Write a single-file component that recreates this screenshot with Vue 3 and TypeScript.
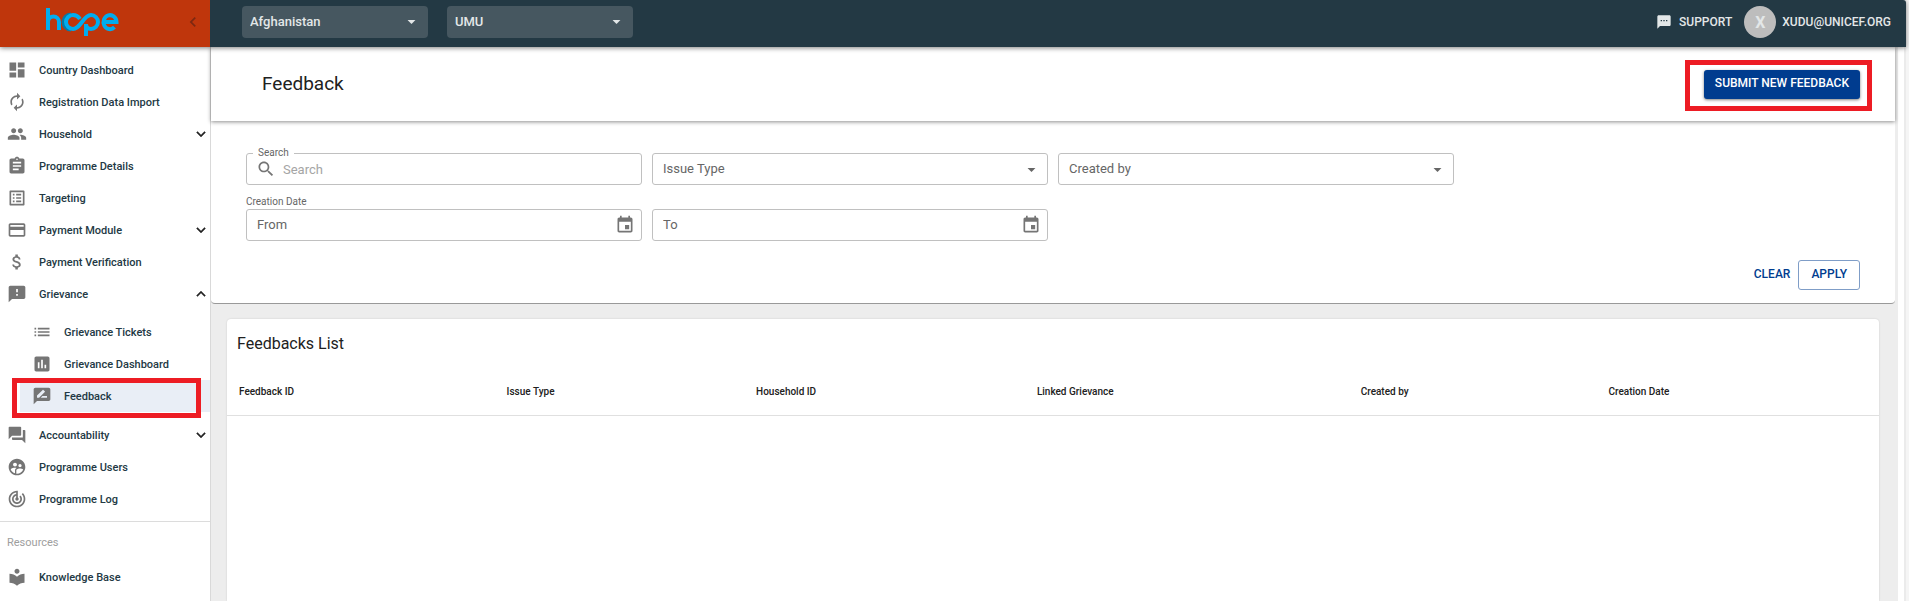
<script setup lang="ts">
import { ref } from 'vue'

interface NavItem {
  label: string
  icon: string
  toggle?: 'more' | 'less'
  children?: { label: string; icon: string; active?: boolean }[]
}

const icons: Record<string, string> = {
  dashboard: 'M3 13h8V3H3v10zm0 8h8v-6H3v6zm10 0h8V11h-8v10zm0-18v6h8V3h-8z',
  autorenew:
    'M12 6v3l4-4-4-4v3c-4.42 0-8 3.58-8 8 0 1.57.46 3.03 1.24 4.26L6.7 14.8c-.45-.83-.7-1.79-.7-2.8 0-3.31 2.69-6 6-6zm6.76 1.74L17.3 9.2c.44.84.7 1.79.7 2.8 0 3.31-2.69 6-6 6v-3l-4 4 4 4v-3c4.42 0 8-3.58 8-8 0-1.57-.46-3.03-1.24-4.26z',
  people:
    'M16 11c1.66 0 2.99-1.34 2.99-3S17.66 5 16 5c-1.66 0-3 1.34-3 3s1.34 3 3 3zm-8 0c1.66 0 2.99-1.34 2.99-3S9.66 5 8 5C6.34 5 5 6.34 5 8s1.34 3 3 3zm0 2c-2.33 0-7 1.17-7 3.5V19h14v-2.5c0-2.33-4.67-3.5-7-3.5zm8 0c-.29 0-.62.02-.97.05 1.16.84 1.97 1.97 1.97 3.45V19h6v-2.5c0-2.33-4.67-3.5-7-3.5z',
  assignment:
    'M19 3h-4.18C14.4 1.84 13.3 1 12 1c-1.3 0-2.4.84-2.82 2H5c-1.1 0-2 .9-2 2v14c0 1.1.9 2 2 2h14c1.1 0 2-.9 2-2V5c0-1.1-.9-2-2-2zm-7 0c.55 0 1 .45 1 1s-.45 1-1 1-1-.45-1-1 .45-1 1-1zm2 14H7v-2h7v2zm3-4H7v-2h10v2zm0-4H7V7h10v2z',
  listAlt:
    'M19 5v14H5V5h14m1.1-2H3.9c-.5 0-.9.4-.9.9v16.2c0 .4.4.9.9.9h16.2c.4 0 .9-.5.9-.9V3.9c0-.5-.5-.9-.9-.9zM11 7h6v2h-6V7zm0 4h6v2h-6v-2zm0 4h6v2h-6zM7 7h2v2H7zm0 4h2v2H7zm0 4h2v2H7z',
  payment:
    'M20 4H4c-1.11 0-1.99.89-1.99 2L2 18c0 1.11.89 2 2 2h16c1.11 0 2-.89 2-2V6c0-1.11-.89-2-2-2zm0 14H4v-6h16v6zm0-10H4V6h16v2z',
  money:
    'M11.8 10.9c-2.27-.59-3-1.2-3-2.15 0-1.09 1.01-1.85 2.7-1.85 1.78 0 2.44.85 2.5 2.1h2.21c-.07-1.72-1.12-3.3-3.21-3.81V3h-3v2.16c-1.94.42-3.5 1.68-3.5 3.61 0 2.31 1.91 3.46 4.7 4.13 2.5.6 3 1.48 3 2.41 0 .69-.49 1.79-2.7 1.79-2.06 0-2.87-.92-2.98-2.1h-2.2c.12 2.19 1.76 3.42 3.68 3.83V21h3v-2.15c1.95-.37 3.5-1.5 3.5-3.55 0-2.84-2.43-3.81-4.7-4.4z',
  feedback:
    'M20 2H4c-1.1 0-1.99.9-1.99 2L2 22l4-4h14c1.1 0 2-.9 2-2V4c0-1.1-.9-2-2-2zm-7 12h-2v-2h2v2zm0-4h-2V6h2v4z',
  list: 'M3 13h2v-2H3v2zm0 4h2v-2H3v2zm0-8h2V7H3v2zm4 4h14v-2H7v2zm0 4h14v-2H7v2zM7 7v2h14V7H7z',
  assessment:
    'M19 3H5c-1.1 0-2 .9-2 2v14c0 1.1.9 2 2 2h14c1.1 0 2-.9 2-2V5c0-1.1-.9-2-2-2zM9 17H7v-7h2v7zm4 0h-2V7h2v10zm4 0h-2v-4h2v4z',
  rateReview:
    'M20 2H4c-1.1 0-1.99.9-1.99 2L2 22l4-4h14c1.1 0 2-.9 2-2V4c0-1.1-.9-2-2-2zM6 14v-2.47l6.88-6.88c.2-.2.51-.2.71 0l1.77 1.77c.2.2.2.51 0 .71L8.47 14H6zm12 0h-7.5l2-2H18v2z',
  forum:
    'M21 6h-2v9H6v2c0 .55.45 1 1 1h11l4 4V7c0-.55-.45-1-1-1zm-4 6V3c0-.55-.45-1-1-1H3c-.55 0-1 .45-1 1v14l4-4h10c.55 0 1-.45 1-1z',
  users:
    'M11.99 2c-5.52 0-10 4.48-10 10s4.48 10 10 10 10-4.48 10-10-4.48-10-10-10zm3.61 6.34c1.07 0 1.93.86 1.93 1.93 0 1.07-.86 1.93-1.93 1.93-1.07 0-1.93-.86-1.93-1.93-.01-1.07.86-1.93 1.93-1.93zm-6-1.58c1.3 0 2.36 1.06 2.36 2.36 0 1.3-1.06 2.36-2.36 2.36s-2.36-1.06-2.36-2.36c0-1.31 1.05-2.36 2.36-2.36zm0 9.13v3.75c-2.4-.75-4.3-2.6-5.14-4.96 1.05-1.12 3.67-1.69 5.14-1.69.53 0 1.2.08 1.9.22-1.64.87-1.9 2.02-1.9 2.68zM11.99 20c-.27 0-.53-.01-.79-.04v-4.07c0-1.42 2.94-2.13 4.4-2.13 1.07 0 2.92.39 3.84 1.15-1.17 2.97-4.06 5.09-7.45 5.09z',
  track:
    'M19.07 4.93l-1.41 1.41C19.1 7.79 20 9.79 20 12c0 4.42-3.58 8-8 8s-8-3.58-8-8c0-4.08 3.05-7.44 7-7.93v2.02C8.16 6.57 6 9.03 6 12c0 3.31 2.69 6 6 6s6-2.69 6-6c0-1.66-.67-3.16-1.76-4.24l-1.41 1.41C15.55 9.9 16 10.9 16 12c0 2.21-1.79 4-4 4s-4-1.79-4-4c0-1.86 1.28-3.41 3-3.86v2.14c-.6.35-1 .98-1 1.72 0 1.1.9 2 2 2s2-.9 2-2c0-.74-.4-1.38-1-1.72V2h-1C6.48 2 2 6.48 2 12s4.48 10 10 10 10-4.48 10-10c0-2.76-1.12-5.26-2.93-7.07z',
  library:
    'M12 11.55C9.64 9.35 6.48 8 3 8v11c3.48 0 6.64 1.35 9 3.55 2.36-2.19 5.52-3.55 9-3.55V8c-3.48 0-6.64 1.35-9 3.55zM12 8c1.66 0 3-1.34 3-3s-1.34-3-3-3-3 1.34-3 3 1.34 3 3 3z',
  sms: 'M20 2H4c-1.1 0-1.99.9-1.99 2L2 22l4-4h14c1.1 0 2-.9 2-2V4c0-1.1-.9-2-2-2zM9 11H7V9h2v2zm4 0h-2V9h2v2zm4 0h-2V9h2v2z',
  search:
    'M15.5 14h-.79l-.28-.27C15.41 12.59 16 11.11 16 9.5 16 5.91 13.09 3 9.5 3S3 5.91 3 9.5 5.91 16 9.5 16c1.61 0 3.09-.59 4.23-1.57l.27.28v.79l5 4.99L20.49 19l-4.99-5zm-6 0C7.01 14 5 11.99 5 9.5S7.01 5 9.5 5 14 7.01 14 9.5 11.99 14 9.5 14z',
  event:
    'M17 12h-5v5h5v-5zM16 1v2H8V1H6v2H5c-1.11 0-1.99.9-1.99 2L3 19c0 1.1.89 2 2 2h14c1.1 0 2-.9 2-2V5c0-1.1-.9-2-2-2h-1V1h-2zm3 18H5V8h14v11z',
  more: 'M16.59 8.59L12 13.17 7.41 8.59 6 10l6 6 6-6z',
  less: 'M12 8l-6 6 1.41 1.41L12 10.83l4.59 4.58L18 14z',
  left: 'M15.41 7.41L14 6l-6 6 6 6 1.41-1.41L10.83 12z',
  drop: 'M7 10l5 5 5-5z',
}

const nav: NavItem[] = [
  { label: 'Country Dashboard', icon: 'dashboard' },
  { label: 'Registration Data Import', icon: 'autorenew' },
  { label: 'Household', icon: 'people', toggle: 'more' },
  { label: 'Programme Details', icon: 'assignment' },
  { label: 'Targeting', icon: 'listAlt' },
  { label: 'Payment Module', icon: 'payment', toggle: 'more' },
  { label: 'Payment Verification', icon: 'money' },
  {
    label: 'Grievance',
    icon: 'feedback',
    toggle: 'less',
    children: [
      { label: 'Grievance Tickets', icon: 'list' },
      { label: 'Grievance Dashboard', icon: 'assessment' },
      { label: 'Feedback', icon: 'rateReview', active: true },
    ],
  },
  { label: 'Accountability', icon: 'forum', toggle: 'more' },
  { label: 'Programme Users', icon: 'users' },
  { label: 'Programme Log', icon: 'track' },
]

const columns = ['Feedback ID', 'Issue Type', 'Household ID', 'Linked Grievance', 'Created by', 'Creation Date']

const search = ref('')
const from = ref('')
const to = ref('')
</script>

<template>
  <div class="app">
    <header class="topbar">
      <div class="brand">
        <svg class="logo" viewBox="0 0 74 30" role="img" aria-label="hope">
          <path class="shade" d="M26 8a7 7 0 0 0 0 14" />
          <path d="M3 1v22M3 15a5.5 5.5 0 0 1 11 0v8" />
          <path d="M35 12C33 9 31 8 28 8a7 7 0 0 0 0 14C36 22 38 8 46 8a7 7 0 0 1 0 14c-3 0-5-2-5-5v12" />
          <path d="M58.5 15H71.5A6.5 7 0 1 0 69.5 20.2" />
        </svg>
        <button class="collapse" type="button" aria-label="Collapse menu">
          <svg viewBox="0 0 24 24"><path :d="icons.left" /></svg>
        </button>
      </div>
      <div class="bar">
        <div class="pick">
          <select aria-label="Business area"><option>Afghanistan</option></select>
          <svg viewBox="0 0 24 24"><path :d="icons.drop" /></svg>
        </div>
        <div class="pick">
          <select aria-label="Programme"><option>UMU</option></select>
          <svg viewBox="0 0 24 24"><path :d="icons.drop" /></svg>
        </div>
        <a class="support" href="#support">
          <svg viewBox="0 0 24 24"><path :d="icons.sms" /></svg>SUPPORT
        </a>
        <button class="user" type="button"><span class="avatar">X</span>XUDU@UNICEF.ORG</button>
      </div>
    </header>

    <div class="body">
      <nav class="sidebar">
        <template v-for="item in nav" :key="item.label">
          <a class="item" href="#">
            <svg class="icon" viewBox="0 0 24 24"><path :d="icons[item.icon]" /></svg>
            <span>{{ item.label }}</span>
            <svg v-if="item.toggle" class="toggle" viewBox="0 0 24 24"><path :d="icons[item.toggle]" /></svg>
          </a>
          <div v-if="item.children" class="sub">
            <a v-for="c in item.children" :key="c.label" class="item" :class="{ active: c.active }" href="#">
              <svg class="icon" viewBox="0 0 24 24"><path :d="icons[c.icon]" /></svg>
              <span>{{ c.label }}</span>
            </a>
          </div>
        </template>
        <hr />
        <div class="caption">Resources</div>
        <a class="item" href="#">
          <svg class="icon" viewBox="0 0 24 24"><path :d="icons.library" /></svg>
          <span>Knowledge Base</span>
        </a>
      </nav>

      <main>
        <section class="page-head">
          <h1>Feedback</h1>
          <div class="marked"><button class="submit" type="button">SUBMIT NEW FEEDBACK</button></div>
        </section>

        <form class="filters" @submit.prevent>
          <div class="row">
            <div class="field">
              <label class="notch" for="search">Search</label>
              <svg class="lens" viewBox="0 0 24 24"><path :d="icons.search" /></svg>
              <input id="search" v-model="search" class="pale" type="text" placeholder="Search" />
            </div>
            <div class="field">
              <select aria-label="Issue Type"><option>Issue Type</option></select>
              <svg class="arrow" viewBox="0 0 24 24"><path :d="icons.drop" /></svg>
            </div>
            <div class="field">
              <select aria-label="Created by"><option>Created by</option></select>
              <svg class="arrow" viewBox="0 0 24 24"><path :d="icons.drop" /></svg>
            </div>
          </div>
          <label class="date-label" for="from">Creation Date</label>
          <div class="row">
            <div class="field">
              <input id="from" v-model="from" type="text" placeholder="From" />
              <button class="cal" type="button" aria-label="Pick start date">
                <svg viewBox="0 0 24 24"><path :d="icons.event" /></svg>
              </button>
            </div>
            <div class="field">
              <input v-model="to" type="text" placeholder="To" aria-label="To" />
              <button class="cal" type="button" aria-label="Pick end date">
                <svg viewBox="0 0 24 24"><path :d="icons.event" /></svg>
              </button>
            </div>
          </div>
          <div class="actions">
            <button class="clear" type="button">CLEAR</button>
            <button class="apply" type="submit">APPLY</button>
          </div>
        </form>

        <section class="card">
          <h2>Feedbacks List</h2>
          <table>
            <thead>
              <tr><th v-for="c in columns" :key="c" scope="col">{{ c }}</th></tr>
            </thead>
          </table>
        </section>
      </main>
      <div class="gutter"></div>
    </div>
  </div>
</template>

<style>
body {
  margin: 0;
  background: #f5f5f5;
}
</style>

<style scoped>
.app {
  display: flex;
  flex-direction: column;
  min-height: 100vh;
  font-family: Roboto, 'Liberation Sans', sans-serif;
  color: #212121;
}
.app *,
.app *::after {
  box-sizing: border-box;
}
button,
input,
select {
  font: inherit;
  color: inherit;
  margin: 0;
  border: 0;
  background: none;
  outline: 0;
}
button {
  padding: 0;
  cursor: pointer;
}
select {
  appearance: none;
}
a {
  color: inherit;
  text-decoration: none;
}
svg {
  fill: currentColor;
  flex: none;
}

.topbar {
  position: relative;
  z-index: 2;
  display: flex;
  height: 47px;
  margin-right: 3px;
  border-top-right-radius: 3px;
  background: #233944;
  box-shadow: 0 1px 5px rgba(0, 0, 0, 0.5);
}
.brand {
  display: flex;
  align-items: center;
  justify-content: space-between;
  width: 210px;
  flex: none;
  padding: 0 7px 4px 45px;
  background: #bf360c;
}
.logo {
  width: 74px;
  height: 30px;
  fill: none;
  stroke: #00adef;
  stroke-width: 4;
}
.logo .shade {
  stroke: #067ba6;
  stroke-width: 5;
}
.collapse {
  width: 20px;
  height: 20px;
  color: #7c2812;
}
.collapse svg {
  display: block;
  width: 20px;
  height: 20px;
}
.bar {
  display: flex;
  align-items: center;
  flex: 1;
  padding: 0 15px 3px 32px;
  font-size: 12px;
  font-weight: 500;
  color: #e3e7e8;
}
.pick {
  position: relative;
  width: 186px;
  height: 32px;
  margin-right: 19px;
  border-radius: 4px;
  background: #465760;
}
.pick select {
  width: 100%;
  height: 100%;
  padding: 0 8px 2px;
  font-size: 13px;
}
.pick svg {
  position: absolute;
  right: 7px;
  top: 6px;
  width: 19px;
  height: 19px;
  pointer-events: none;
}
.support {
  display: flex;
  align-items: center;
  gap: 7px;
  margin-left: auto;
}
.support svg {
  width: 16px;
  height: 16px;
}
.user {
  display: flex;
  align-items: center;
  gap: 6px;
  margin-left: 12px;
}
.avatar {
  display: grid;
  place-items: center;
  width: 32px;
  height: 32px;
  border-radius: 50%;
  background: #bdbdbd;
  font-size: 16px;
  font-weight: 700;
}

.body {
  display: flex;
  flex: 1;
}
.sidebar {
  width: 211px;
  flex: none;
  padding: 7px 0;
  border-right: 1px solid #d9d9d9;
  background: #fff;
}
.item {
  display: flex;
  align-items: center;
  height: 32px;
  padding-left: 7px;
  color: #233944;
  font-size: 11px;
  font-weight: 500;
}
.icon {
  width: 20px;
  height: 20px;
  margin-right: 12px;
  color: #757575;
}
.toggle {
  width: 18px;
  height: 18px;
  margin-left: auto;
  color: #222;
}
.toggle path {
  stroke: currentColor;
  stroke-width: 0.5;
}
.sub {
  padding: 6px 0 7px 20px;
}
.sub .item {
  padding-left: 12px;
}
.active {
  position: relative;
  background: #e9eef6;
}
.active::after {
  content: '';
  position: absolute;
  inset: -2px 9px -6px -8px;
  border: 5px solid #ed1c24;
}
hr {
  height: 1px;
  margin: 6px 0 0;
  border: 0;
  background: #dcdcdc;
}
.caption {
  padding: 14px 7px 11px;
  font-size: 11px;
  line-height: 14px;
  color: #9e9e9e;
}

main {
  display: flex;
  flex-direction: column;
  flex: 1;
  min-width: 0;
  padding-right: 3px;
  background: #ededed;
}
.gutter {
  width: 11px;
  flex: none;
  border-right: 3px solid #f5f5f5;
  background: #fff;
  box-shadow: inset -2px 0 #ebebeb;
}
.page-head {
  position: relative;
  z-index: 1;
  display: flex;
  align-items: center;
  justify-content: space-between;
  height: 74px;
  padding: 0 35px 0 51px;
  background: #fff;
  box-shadow: 0 1px 4px rgba(0, 0, 0, 0.45);
}
h1,
h2 {
  margin: 0;
  font-weight: 400;
}
h1 {
  padding-bottom: 2px;
  font-size: 19px;
}
.marked {
  position: relative;
}
.marked::after {
  content: '';
  position: absolute;
  inset: -10px -12px -12px -19px;
  border: 5px solid #ed1c24;
  pointer-events: none;
}
.submit {
  display: block;
  height: 29px;
  padding: 0 11px 2px;
  border-radius: 3px;
  background: #003c8f;
  box-shadow: 0 1px 3px rgba(0, 0, 0, 0.5);
  color: #fff;
  font-size: 12px;
  font-weight: 500;
}
.filters {
  padding: 32px 35px 13px;
  border-bottom: 1px solid #999;
  border-radius: 0 0 4px 4px;
  background: #fff;
  font-size: 13px;
  color: #666;
}
.row {
  display: grid;
  grid-template-columns: repeat(4, 1fr);
  gap: 10px;
}
.field {
  position: relative;
  display: flex;
  align-items: center;
  height: 32px;
  border: 1px solid #c0c0c0;
  border-radius: 3px;
}
.field input,
.field select {
  flex: 1;
  min-width: 0;
  height: 100%;
  padding: 0 10px 2px;
}
.field input::placeholder {
  color: #666;
  opacity: 1;
}
.field .pale {
  padding: 1px 7px 0;
}
.field .pale::placeholder {
  color: #a5a5a5;
}
.notch {
  position: absolute;
  top: -7px;
  left: 6px;
  padding: 0 5px;
  background: #fff;
  font-size: 10px;
  line-height: 12px;
}
.lens {
  width: 20px;
  height: 20px;
  margin-left: 9px;
  color: #757575;
}
.arrow {
  position: absolute;
  right: 6px;
  top: 6px;
  width: 19px;
  height: 19px;
  pointer-events: none;
}
.cal {
  margin-right: 6px;
  color: #757575;
}
.cal svg {
  display: block;
  width: 20px;
  height: 20px;
}
.date-label {
  display: block;
  padding: 11px 0 1px;
  font-size: 10px;
  line-height: 12px;
}
.actions {
  display: flex;
  justify-content: flex-end;
  gap: 8px;
  margin-top: 19px;
  font-size: 12px;
  font-weight: 500;
  color: #003c8f;
}
.apply {
  height: 30px;
  padding: 0 12px 2px;
  border: 1px solid #7f9dc7;
  border-radius: 3px;
}
.clear {
  height: 28px;
}
.card {
  flex: 1;
  margin: 15px 16px 0;
  border-radius: 4px 4px 0 0;
  background: #fff;
  box-shadow: 0 0 2px rgba(0, 0, 0, 0.15);
}
h2 {
  padding: 13px 10px 11px;
  font-size: 16px;
  line-height: 24px;
}
table {
  width: 100%;
  border-collapse: collapse;
  table-layout: fixed;
}
th {
  height: 48px;
  padding: 2px 12px 0;
  border-bottom: 1px solid #e0e0e0;
  font-size: 10px;
  font-weight: 500;
  text-align: left;
}
th:nth-child(1) {
  width: 16.2%;
}
th:nth-child(2) {
  width: 15.1%;
}
th:nth-child(3) {
  width: 17%;
}
th:nth-child(4) {
  width: 19.6%;
}
th:nth-child(5) {
  width: 15%;
}
</style>
